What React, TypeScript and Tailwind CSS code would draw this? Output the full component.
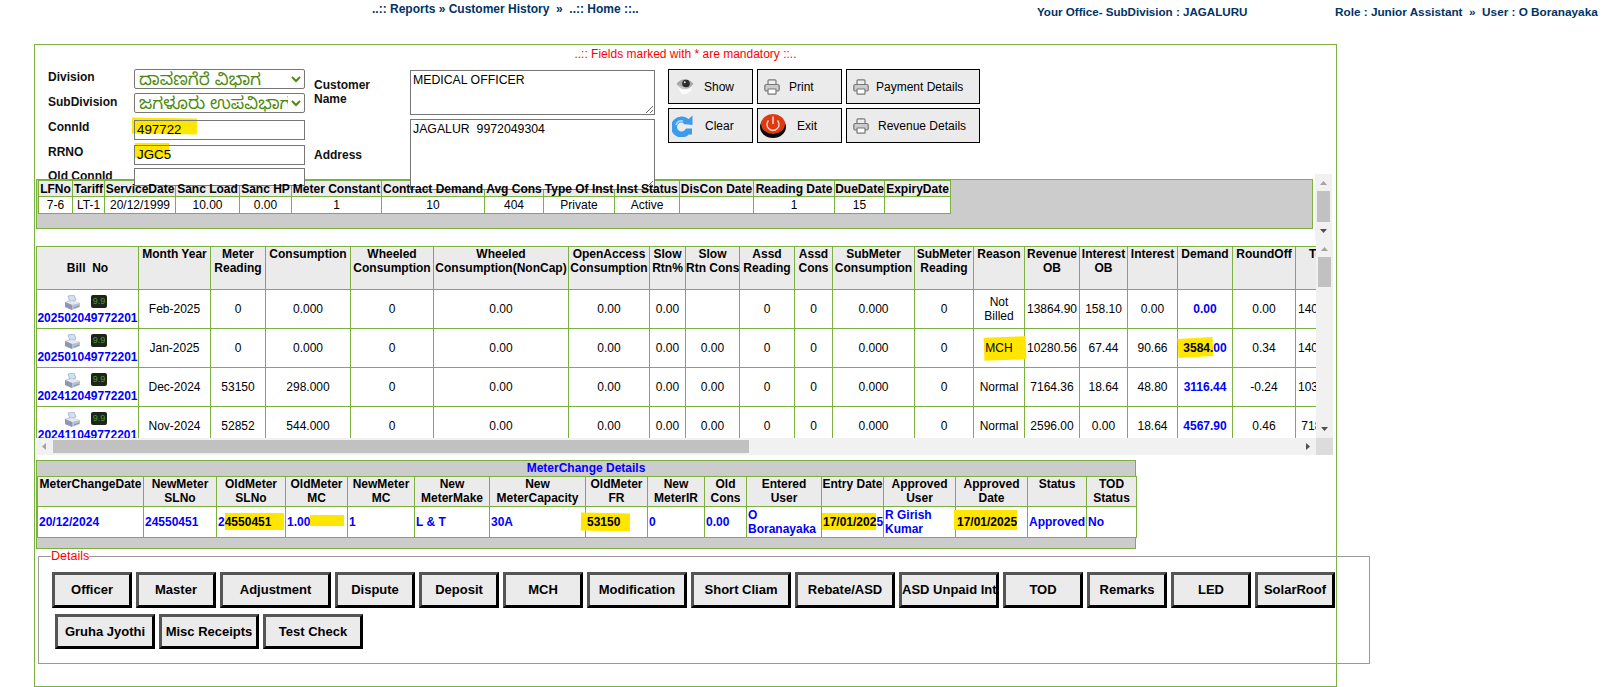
import type { ReactNode } from "react";

const font = "font-['Liberation_Sans',Arial,'Noto_Sans',sans-serif]";
const kannada = "font-['Noto_Sans_Kannada','Noto_Sans',sans-serif]";

const Marker = ({ children, className }: { children?: ReactNode; className: string }) => (
  <span className="relative inline-block">
    <span className={`absolute bg-[#ffe600] ${className}`} />
    <span className="relative">{children}</span>
  </span>
);

const EyeIcon = () => (
  <svg width="18" height="17" viewBox="0 0 18 17">
    <path d="M2 9 C6 13 12 13 16 9 C15 15 9 18 5 15Z" fill="#fbfbfb" />
    <path d="M0.5 6 C5 -0.5 13 0 17.5 6 C14 10 11 11 9 11 C6 11 3 9 0.5 6Z" fill="#a8a8a8" />
    <path d="M2 6.5 C5 9 8 10.5 12 9.5 C9 12 5 10 2 6.5Z" fill="#e8e8e8" />
    <circle cx="10" cy="5.5" r="3.8" fill="#2b2b2b" />
    <circle cx="8.8" cy="4.2" r="1" fill="#e0e0e0" />
  </svg>
);

const PrinterIcon = () => (
  <svg width="16" height="16" viewBox="0 0 16 16" fill="#eee" stroke="#777" strokeWidth="1.2">
    <rect x="4" y="0.8" width="8" height="5" rx="1" />
    <rect x="0.8" y="5.5" width="14.4" height="6.5" rx="1.5" fill="#ccc" />
    <rect x="4" y="10" width="8" height="5.2" rx="0.5" fill="#fff" />
  </svg>
);

const ClearIcon = () => (
  <svg width="21" height="22" viewBox="0 0 21 22">
    <path d="M15.5 7.5 A7.5 7.5 0 1 0 15.5 16.5 L20 16.5" stroke="#3d9bec" strokeWidth="6" fill="none" />
    <path d="M20.5 0.5 L20.5 10 L11 9 Z" fill="#3d9bec" />
    <path d="M4 10 C5 7 8 5.5 11 6" stroke="#a9d8fb" strokeWidth="1.6" fill="none" />
  </svg>
);

const ExitIcon = () => (
  <svg width="26" height="24" viewBox="0 0 26 24">
    <ellipse cx="13" cy="13" rx="13" ry="11" fill="#0a0a0a" />
    <ellipse cx="13" cy="10" rx="12" ry="10" fill="#dd3a12" />
    <path d="M8.5 6.5 A6 6 0 1 0 17.5 6.5" stroke="#ffd9c8" strokeWidth="1.4" fill="none" />
    <path d="M13 2.5 V10" stroke="#ffd9c8" strokeWidth="1.6" />
  </svg>
);

const BillPrinterIcon = () => (
  <svg width="17" height="16" viewBox="0 0 17 16">
    <path d="M4 1 L10 0 L12 5 L6 7Z" fill="#cfe1f2" stroke="#8aa0bd" strokeWidth="0.6" />
    <path d="M1 7 L6 5 L16 8 L16 12 L8 15 L1 12Z" fill="#b7bfd6" />
    <path d="M1 7 L8 10 L16 8 L8 6Z" fill="#e4e8f0" />
    <path d="M8 10 L8 15 L1 12 L1 7Z" fill="#8f97b5" />
    <path d="M10 13 L15 11" stroke="#6f8f6a" strokeWidth="0.8" />
  </svg>
);

const MeterIcon = () => (
  <span className="flex h-[13px] w-[16px] items-center justify-center rounded-[2px] bg-[#1c241c] text-[9px] leading-none text-[#4f9a2a]">
    9.9
  </span>
);

const Arrow = ({ dir, dark }: { dir: "up" | "down" | "left" | "right"; dark?: boolean }) => {
  const points = {
    up: "0,4 7,4 3.5,0",
    down: "0,0 7,0 3.5,4",
    left: "4,0 4,7 0,3.5",
    right: "0,0 0,7 4,3.5",
  }[dir];
  const wide = dir === "up" || dir === "down";
  return (
    <svg width={wide ? 7 : 4} height={wide ? 4 : 7} viewBox={wide ? "0 0 7 4" : "0 0 4 7"}>
      <polygon points={points} fill={dark ? "#505050" : "#a3a3a3"} />
    </svg>
  );
};

const VScroll = ({ height, thumbTop, thumbHeight }: { height: string; thumbTop: string; thumbHeight: string }) => (
  <div className={`flex w-[17px] shrink-0 flex-col items-center justify-between bg-[#f1f1f1] py-[7px] ${height} relative`}>
    <Arrow dir="up" />
    <div className={`absolute left-[2px] w-[13px] bg-[#c1c1c1] ${thumbTop} ${thumbHeight}`} />
    <Arrow dir="down" dark />
  </div>
);

const ActionButton = ({ icon, label, className }: { icon: ReactNode; label: string; className: string }) => (
  <button className={`flex h-[35px] items-center border border-black bg-[#ebebeb] text-[12px] text-black ${className}`}>
    {icon}
    <span>{label}</span>
  </button>
);

const Label = ({ children, className = "" }: { children: ReactNode; className?: string }) => (
  <div className={`text-[12px] font-bold leading-[14px] text-[#111] ${className}`}>{children}</div>
);

const selectClass = `h-[20px] w-[171px] rounded-[2px] border border-[#777] bg-white text-[17px] text-[#4f8a10] ${kannada}`;
const inputClass = "h-[20px] w-[171px] border border-[#777] px-[2px] text-[13.33px] text-black";

const summaryCols = [34, 32, 71, 64, 52, 90, 103, 59, 71, 65, 74, 81, 50, 66];
const summaryHead = ["LFNo", "Tariff", "ServiceDate", "Sanc Load", "Sanc HP", "Meter Constant", "Contract Demand", "Avg Cons", "Type Of Inst", "Inst Status", "DisCon Date", "Reading Date", "DueDate", "ExpiryDate"];
const summaryRow = ["7-6", "LT-1", "20/12/1999", "10.00", "0.00", "1", "10", "404", "Private", "Active", "", "1", "15", ""];

const billCols = [102, 72, 55, 85, 83, 135, 81, 36, 54, 55, 38, 82, 59, 51, 55, 48, 50, 55, 63, 55];
const billHead: ReactNode[] = [
  "Bill\u00a0\u00a0No",
  "Month Year",
  <>Meter<br />Reading</>,
  "Consumption",
  <>Wheeled<br />Consumption</>,
  <>Wheeled<br />Consumption(NonCap)</>,
  <>OpenAccess<br />Consumption</>,
  <>Slow<br />Rtn%</>,
  <>Slow<br />Rtn Cons</>,
  <>Assd<br />Reading</>,
  <>Assd<br />Cons</>,
  <>SubMeter<br />Consumption</>,
  <>SubMeter<br />Reading</>,
  "Reason",
  <>Revenue<br />OB</>,
  <>Interest<br />OB</>,
  "Interest",
  "Demand",
  "RoundOff",
  "Total",
];

const bills = [
  { no: "202502049772201", month: "Feb-2025", reading: "0", cons: "0.000", slow: "", reason: <>Not<br />Billed</>, revenue: "13864.90", intOb: "158.10", interest: "0.00", demand: <b className="text-[#0000ff]">0.00</b>, round: "0.00", total: "14023.00" },
  { no: "202501049772201", month: "Jan-2025", reading: "0", cons: "0.000", slow: "0.00", reason: <Marker className="-left-[1px] -right-[14px] -top-[4px] -bottom-[5px] -rotate-2">MCH</Marker>, revenue: "10280.56", intOb: "67.44", interest: "90.66", demand: <b className="text-[#0000ff]"><Marker className="-left-[5px] right-0 -top-[3px] -bottom-[2px] -rotate-3"><span className="text-black">3584.</span></Marker>00</b>, round: "0.34", total: "14023.00" },
  { no: "202412049772201", month: "Dec-2024", reading: "53150", cons: "298.000", slow: "0.00", reason: "Normal", revenue: "7164.36", intOb: "18.64", interest: "48.80", demand: <b className="text-[#0000ff]">3116.44</b>, round: "-0.24", total: "10348.00" },
  { no: "202411049772201", month: "Nov-2024", reading: "52852", cons: "544.000", slow: "0.00", reason: "Normal", revenue: "2596.00", intOb: "0.00", interest: "18.64", demand: <b className="text-[#0000ff]">4567.90</b>, round: "0.46", total: "7183.00" },
];

const meterCols = [106, 73, 69, 62, 67, 75, 96, 62, 57, 42, 75, 62, 72, 72, 59, 50];
const meterHead: ReactNode[] = [
  "MeterChangeDate",
  <>NewMeter<br />SLNo</>,
  <>OldMeter<br />SLNo</>,
  <>OldMeter<br />MC</>,
  <>NewMeter<br />MC</>,
  <>New<br />MeterMake</>,
  <>New<br />MeterCapacity</>,
  <>OldMeter<br />FR</>,
  <>New<br />MeterIR</>,
  <>Old<br />Cons</>,
  <>Entered<br />User</>,
  "Entry Date",
  <>Approved<br />User</>,
  <>Approved<br />Date</>,
  "Status",
  <>TOD<br />Status</>,
];
const meterRow: ReactNode[] = [
  "20/12/2024",
  "24550451",
  <>2<Marker className="left-0 -right-[13px] -top-[2px] -bottom-[1px]"><span className="text-black">4550451</span></Marker></>,
  <>1.00<Marker className="left-0 w-[34px] -top-[11px] h-[11px]">{""}</Marker></>,
  "1",
  "L & T",
  "30A",
  <Marker className="-left-[6px] -right-[10px] -top-[2px] -bottom-[2px] rotate-1"><span className="text-black">53150</span></Marker>,
  "0",
  "0.00",
  "O Boranayaka",
  <span className="whitespace-nowrap"><Marker className="-left-[1px] right-0 -top-[2px] -bottom-[1px]"><span className="text-black">17/01/202</span></Marker>5</span>,
  "R Girish Kumar",
  <Marker className="-left-[3px] right-0 -top-[5px] -bottom-[1px]"><span className="text-black">17/01/2025</span></Marker>,
  "Approved",
  "No",
];

const detailRows = [
  [["Officer", "w-[80px]"], ["Master", "w-[80px]"], ["Adjustment", "w-[111px]"], ["Dispute", "w-[80px]"], ["Deposit", "w-[80px]"], ["MCH", "w-[80px]"], ["Modification", "w-[100px]"], ["Short Cliam", "w-[100px]"], ["Rebate/ASD", "w-[100px]"], ["ASD Unpaid Int", "w-[100px]"], ["TOD", "w-[80px]"], ["Remarks", "w-[80px]"], ["LED", "w-[80px]"], ["SolarRoof", "w-[80px]"]],
  [["Gruha Jyothi", "w-[100px]"], ["Misc Receipts", "w-[100px]"], ["Test Check", "w-[100px]"]],
];

const cell = "border border-[#7cb041] p-0 text-center";

export default function App() {
  return (
    <div className={`relative h-[687px] w-[1620px] overflow-hidden bg-white ${font}`}>
      <header className="flex h-[44px] font-bold text-[#003366]">
        <div className="w-[1037px] pl-[372px] text-[12px]">..:: Reports » Customer History &nbsp;»&nbsp; ..:: Home ::..</div>
        <div className="w-[298px] pt-[3px] text-[11.6px]">Your Office- SubDivision : JAGALURU</div>
        <div className="whitespace-nowrap pt-[3px] text-[11.75px]">Role : Junior Assistant &nbsp;»&nbsp; User : O Boranayaka</div>
      </header>

      <main className="ml-[34px] h-[643px] w-[1303px] border border-[#7cb041]">
        <div className="h-[129px]">
          <div className="pt-[2px] text-center text-[12px] leading-[14px] text-[#ff0000]">..:: Fields marked with * are mandatory ::..</div>

          <div className="mt-[8px] flex items-start">
            <div className="ml-[13px] w-[266px]">
              <div className="flex h-[20px] items-center">
                <Label className="mb-[4px] w-[86px]">Division</Label>
                <select className={selectClass} defaultValue="a">
                  <option value="a">ದಾವಣಗೆರೆ ವಿಭಾಗ</option>
                </select>
              </div>
              <div className="mt-[4px] flex h-[20px] items-center">
                <Label className="mb-[2px] w-[86px]">SubDivision</Label>
                <select className={selectClass} defaultValue="a">
                  <option value="a">ಜಗಳೂರು ಉಪವಿಭಾಗ</option>
                </select>
              </div>
              <div className="mt-[6px] flex h-[20px] items-center">
                <Label className="mb-[4px] w-[86px]">ConnId</Label>
                <div className="relative">
                  <span className="absolute -left-[2px] top-[1px] h-[16px] w-[65px] rotate-1 bg-[#ffe600]" />
                  <input readOnly value="497722" className={`relative bg-transparent ${inputClass}`} />
                </div>
              </div>
              <div className="mt-[5px] flex h-[20px] items-center">
                <Label className="mb-[4px] w-[86px]">RRNO</Label>
                <div className="relative">
                  <span className="absolute left-[1px] top-[1px] h-[15px] w-[34px] bg-[#ffe600]" />
                  <input readOnly value="JGC5" className={`relative bg-transparent ${inputClass}`} />
                </div>
              </div>
              <div className="mt-[4px] flex h-[18px] items-center">
                <Label className="mb-[2px] w-[86px]">Old ConnId</Label>
                <input readOnly value="" className="relative z-10 h-[18px] w-[171px] border border-[#777] bg-white" />
              </div>
            </div>

            <div className="w-[96px] pt-[9px]">
              <Label>Customer<br />Name</Label>
              <Label className="mt-[42px]">Address</Label>
            </div>

            <div className="flex w-[245px] flex-col gap-[4px] pt-px">
              <textarea readOnly defaultValue="MEDICAL OFFICER" className="h-[45px] w-[245px] resize border border-[#777] bg-white px-[2px] pt-[2px] text-[12.3px] leading-[14px] text-black" />
              <textarea readOnly defaultValue="JAGALUR  9972049304" className="relative z-10 h-[71px] w-[245px] resize border border-[#777] bg-white px-[2px] pt-[2px] text-[12.3px] leading-[14px] text-black" />
            </div>

            <div className="ml-[13px] grid grid-cols-[85px_85px_134px] gap-x-[4px] gap-y-[4px]">
              <ActionButton icon={<EyeIcon />} label="Show" className="gap-[10px] pl-[7px]" />
              <ActionButton icon={<PrinterIcon />} label="Print" className="gap-[9px] pl-[6px]" />
              <ActionButton icon={<PrinterIcon />} label="Payment Details" className="gap-[7px] pl-[6px]" />
              <ActionButton icon={<ClearIcon />} label="Clear" className="gap-[12px] pl-[3px]" />
              <ActionButton icon={<ExitIcon />} label="Exit" className="gap-[11px] pl-[2px]" />
              <ActionButton icon={<PrinterIcon />} label="Revenue Details" className="gap-[9px] pl-[6px]" />
            </div>
          </div>
        </div>

        <div className="flex h-[66px] items-start">
          <div className="ml-px mt-[5px] h-[50px] w-[1277px] border border-[#7cb041] bg-[#cccccc]">
            <table className="ml-px table-fixed border-collapse bg-white text-[12px] leading-[14px] text-black" style={{ width: 912 }}>
              <colgroup>
                {summaryCols.map((w, i) => <col key={i} style={{ width: w }} />)}
              </colgroup>
              <thead>
                <tr className="h-[16px] bg-[#ebebeb] font-bold">
                  {summaryHead.map((h) => (
                    <th key={h} className={`${cell} whitespace-nowrap text-[12px]`}><span className="relative z-20">{h}</span></th>
                  ))}
                </tr>
              </thead>
              <tbody>
                <tr className="h-[17px]">
                  {summaryRow.map((v, i) => <td key={i} className={cell}>{v}</td>)}
                </tr>
              </tbody>
            </table>
          </div>
          <div className="ml-[2px]">
            <VScroll height="h-[66px]" thumbTop="top-[17px]" thumbHeight="h-[31px]" />
          </div>
        </div>

        <div className="ml-px w-[1297px]">
          <div className="flex items-start">
            <div className="mt-[6px] h-[192px] w-[1280px] overflow-hidden">
              <table className="table-fixed border-collapse text-[12px] leading-[14px] text-black" style={{ width: 1314 }}>
                <colgroup>
                  {billCols.map((w, i) => <col key={i} style={{ width: w }} />)}
                </colgroup>
                <thead>
                  <tr className="h-[43px] bg-[#ebebeb]">
                    {billHead.map((h, i) => (
                      <th key={i} className={`${cell} whitespace-nowrap text-[12px] font-bold ${i === 0 ? "align-middle" : "align-top"}`}>{h}</th>
                    ))}
                  </tr>
                </thead>
                <tbody>
                  {bills.map((b) => (
                    <tr key={b.no} className="h-[39px]">
                      <td className={cell}>
                        <div className="flex justify-center gap-[10px] pr-[4px] pt-px">
                          <BillPrinterIcon />
                          <MeterIcon />
                        </div>
                        <div className="font-bold text-[#0000ff]">{b.no}</div>
                      </td>
                      <td className={cell}>{b.month}</td>
                      <td className={cell}>{b.reading}</td>
                      <td className={cell}>{b.cons}</td>
                      <td className={cell}>0</td>
                      <td className={cell}>0.00</td>
                      <td className={cell}>0.00</td>
                      <td className={cell}>0.00</td>
                      <td className={cell}>{b.slow}</td>
                      <td className={cell}>0</td>
                      <td className={cell}>0</td>
                      <td className={cell}>0.000</td>
                      <td className={cell}>0</td>
                      <td className={cell}>{b.reason}</td>
                      <td className={cell}>{b.revenue}</td>
                      <td className={cell}>{b.intOb}</td>
                      <td className={cell}>{b.interest}</td>
                      <td className={cell}>{b.demand}</td>
                      <td className={cell}>{b.round}</td>
                      <td className={cell}>{b.total}</td>
                    </tr>
                  ))}
                </tbody>
              </table>
            </div>
            <VScroll height="h-[198px]" thumbTop="top-[17px]" thumbHeight="h-[30px]" />
          </div>

          <div className="relative flex h-[17px] w-[1297px] items-center justify-between bg-[#f1f1f1] pl-[6px] pr-[23px]">
            <Arrow dir="left" />
            <div className="absolute left-[17px] top-[2px] h-[13px] w-[696px] bg-[#c1c1c1]" />
            <Arrow dir="right" dark />
            <div className="absolute right-0 top-0 h-[17px] w-[17px] bg-[#dcdcdc]" />
          </div>
        </div>

        <div className="ml-px mt-[5px] w-[1100px] border border-[#7cb041] bg-[#cccccc] pb-[10px]">
          <div className="h-[15px] text-center text-[12px] font-bold leading-[14px] text-[#0000ff]">MeterChange Details</div>
          <table className="table-fixed border-collapse text-[12px] leading-[14px] text-black" style={{ width: 1098 }}>
            <colgroup>
              {meterCols.map((w, i) => <col key={i} style={{ width: w }} />)}
            </colgroup>
            <thead>
              <tr className="h-[30px] bg-[#ebebeb]">
                {meterHead.map((h, i) => (
                  <th key={i} className={`${cell} whitespace-nowrap align-top text-[12px] font-bold`}>{h}</th>
                ))}
              </tr>
            </thead>
            <tbody>
              <tr className="h-[31px] bg-white font-bold text-[#0000ff]">
                {meterRow.map((v, i) => (
                  <td key={i} className={`${cell} pl-px text-left leading-[14px]`}>{v}</td>
                ))}
              </tr>
            </tbody>
          </table>
        </div>

        <fieldset className="ml-[3px] h-[115px] w-[1332px] border border-[#9a9a9a] pl-[13px]">
          <legend className="-ml-px text-[12.5px] leading-[14px] text-[#ff0000]">Details</legend>
          <div className="mt-[9px] flex gap-x-[4px]">
            {detailRows[0].map(([label, width]) => (
              <button key={label} className={`h-[36px] overflow-hidden whitespace-nowrap border-[3px] border-b-black border-l-[#555] border-r-black border-t-[#555] bg-[#ebebeb] text-[13px] font-bold text-black ${width}`}>{label}</button>
            ))}
          </div>
          <div className="ml-[3px] mt-[6px] flex gap-x-[4px]">
            {detailRows[1].map(([label, width]) => (
              <button key={label} className={`h-[35px] whitespace-nowrap border-[3px] border-b-black border-l-[#555] border-r-black border-t-[#555] bg-[#ebebeb] text-[13px] font-bold text-black ${width}`}>{label}</button>
            ))}
          </div>
        </fieldset>
      </main>
    </div>
  );
}
